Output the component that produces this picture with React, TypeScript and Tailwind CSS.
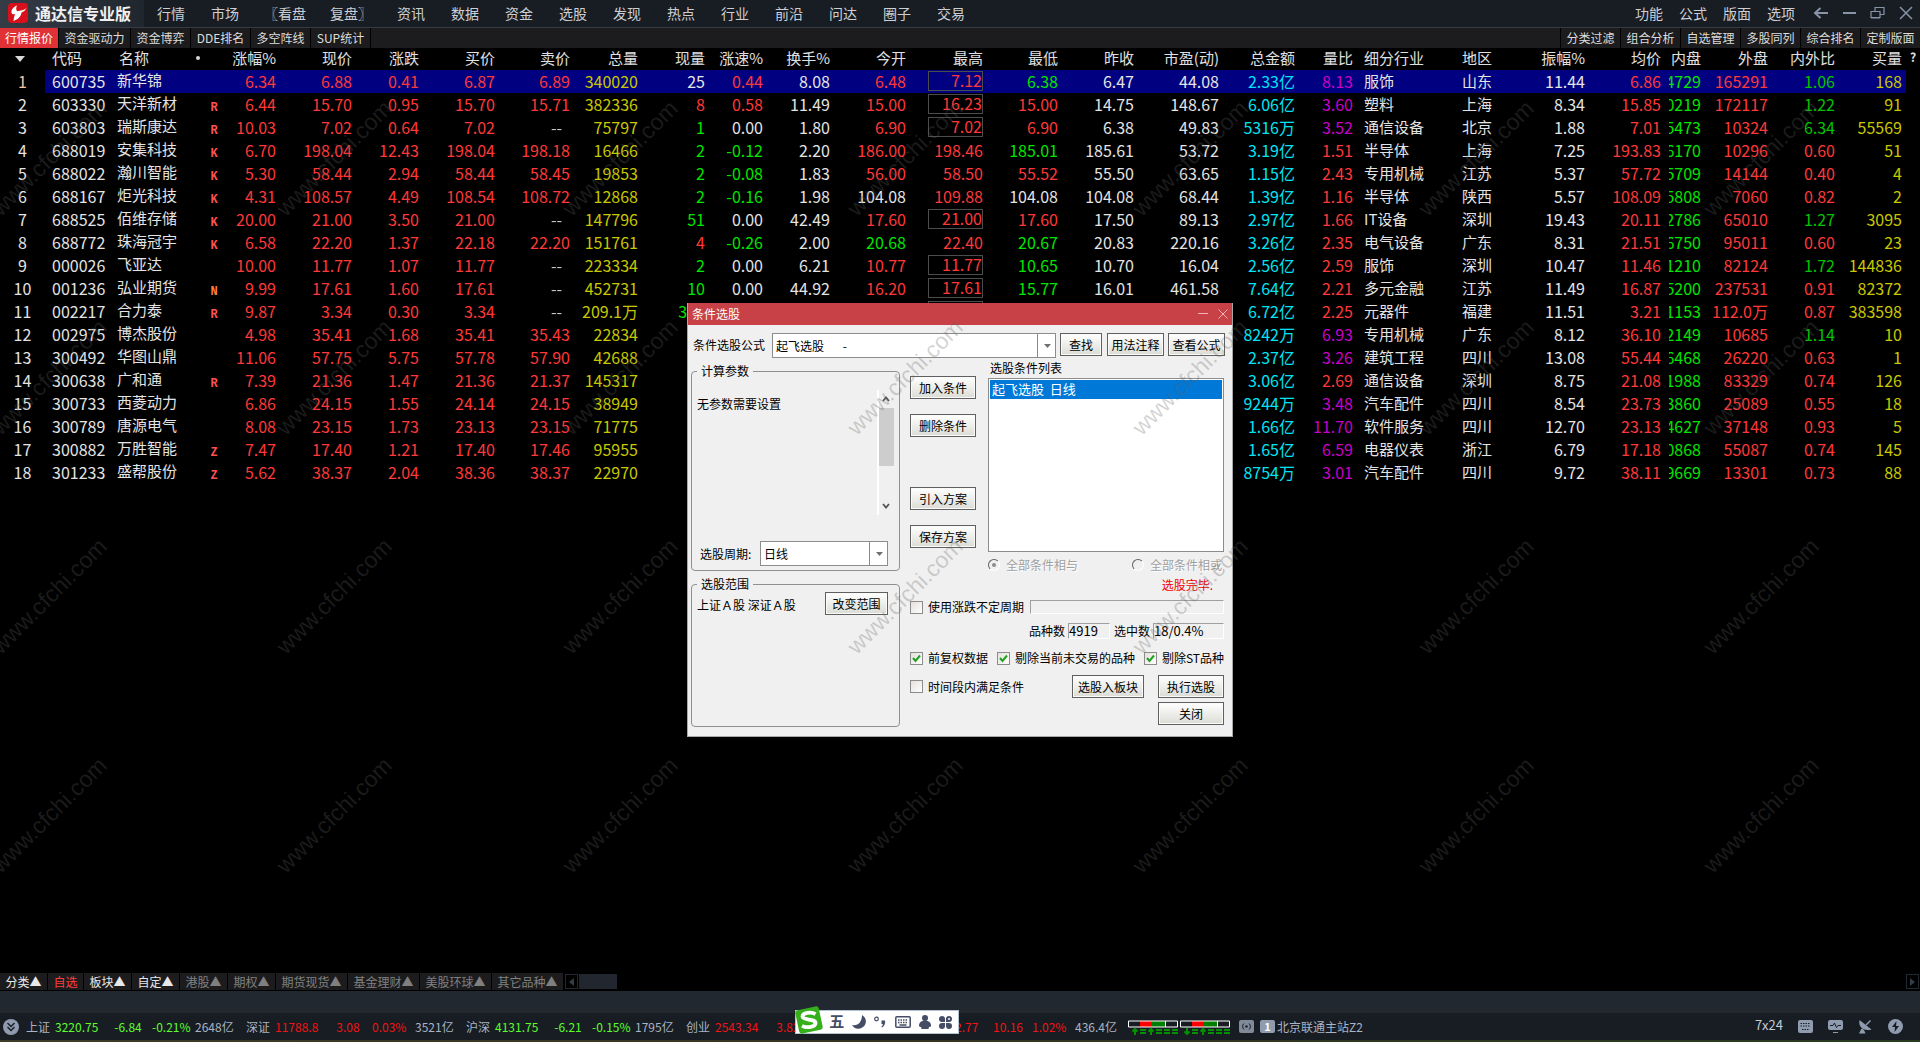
import type { ReactNode } from "react";

type Row = string[];

const HEAD: [string, string][] = [
  ["涨幅%", "w-[50px]"],
  ["现价", "w-[76px]"],
  ["涨跌", "w-[67px]"],
  ["买价", "w-[76px]"],
  ["卖价", "w-[75px]"],
  ["总量", "w-[68px]"],
  ["现量", "w-[67px]"],
  ["涨速%", "w-[58px]"],
  ["换手%", "w-[67px]"],
  ["今开", "w-[76px]"],
  ["最高", "w-[77px]"],
  ["最低", "w-[75px]"],
  ["昨收", "w-[76px]"],
  ["市盈(动)", "w-[85px]"],
  ["总金额", "w-[76px]"],
  ["量比", "w-[58px]"],
  ["细分行业", "w-[109px]"],
  ["地区", "w-[58px]"],
  ["振幅%", "w-[65px]"],
  ["均价", "w-[76px]"],
  ["内盘", "w-[40px]"],
  ["外盘", "w-[67px]"],
  ["内外比", "w-[67px]"],
  ["买量", "w-[71px] pr-1"],
];

const RAW = `600735|新华锦||6.34|6.88|0.41|6.87|6.89|340020|w25|r0.44|8.08|r6.48|*7.12|g6.38|6.47|44.08|2.33亿|m8.13|服饰|山东|11.44|6.86|4729|165291|g1.06|168
603330|天洋新材|R|6.44|15.70|0.95|15.70|15.71|382336|r8|r0.58|11.49|r15.00|*16.23|r15.00|14.75|148.67|6.06亿|m3.60|塑料|上海|8.34|15.85|0219|172117|g1.22|91
603803|瑞斯康达|R|10.03|7.02|0.64|7.02|--|75797|g1|w0.00|1.80|r6.90|*7.02|r6.90|6.38|49.83|5316万|m3.52|通信设备|北京|1.88|7.01|5473|10324|g6.34|55569
688019|安集科技|K|6.70|198.04|12.43|198.04|198.18|16466|g2|g-0.12|2.20|r186.00|198.46|g185.01|185.61|53.72|3.19亿|r1.51|半导体|上海|7.25|193.83|6170|10296|r0.60|51
688022|瀚川智能|K|5.30|58.44|2.94|58.44|58.45|19853|g2|g-0.08|1.83|r56.00|58.50|r55.52|55.50|63.65|1.15亿|r2.43|专用机械|江苏|5.37|57.72|5709|14144|r0.40|4
688167|炬光科技|K|4.31|108.57|4.49|108.54|108.72|12868|g2|g-0.16|1.98|w104.08|109.88|w104.08|104.08|68.44|1.39亿|r1.16|半导体|陕西|5.57|108.09|5808|7060|r0.82|2
688525|佰维存储|K|20.00|21.00|3.50|21.00|--|147796|g51|w0.00|42.49|r17.60|*21.00|r17.60|17.50|89.13|2.97亿|r1.66|IT设备|深圳|19.43|20.11|2786|65010|g1.27|3095
688772|珠海冠宇|K|6.58|22.20|1.37|22.18|22.20|151761|r4|g-0.26|2.00|g20.68|22.40|g20.67|20.83|220.16|3.26亿|r2.35|电气设备|广东|8.31|21.51|6750|95011|r0.60|23
000026|飞亚达||10.00|11.77|1.07|11.77|--|223334|g2|w0.00|6.21|r10.77|*11.77|g10.65|10.70|16.04|2.56亿|r2.59|服饰|深圳|10.47|11.46|1210|82124|g1.72|144836
001236|弘业期货|N|9.99|17.61|1.60|17.61|--|452731|g10|w0.00|44.92|r16.20|*17.61|g15.77|16.01|461.58|7.64亿|r2.21|多元金融|江苏|11.49|16.87|5200|237531|r0.91|82372
002217|合力泰|R|9.87|3.34|0.30|3.34|--|209.1万|g330||||*3.34||||6.72亿|r2.25|元器件|福建|11.51|3.21|1153|112.0万|r0.87|383598
002975|博杰股份||4.98|35.41|1.68|35.41|35.43|22834|||||||||8242万|m6.93|专用机械|广东|8.12|36.10|2149|10685|g1.14|10
300492|华图山鼎||11.06|57.75|5.75|57.78|57.90|42688|||||||||2.37亿|m3.26|建筑工程|四川|13.08|55.44|6468|26220|r0.63|1
300638|广和通|R|7.39|21.36|1.47|21.36|21.37|145317|||||||||3.06亿|r2.69|通信设备|深圳|8.75|21.08|1988|83329|r0.74|126
300733|西菱动力||6.86|24.15|1.55|24.14|24.15|38949|||||||||9244万|m3.48|汽车配件|四川|8.54|23.73|3860|25089|r0.55|18
300789|唐源电气||8.08|23.15|1.73|23.13|23.15|71775|||||||||1.66亿|m11.70|软件服务|四川|12.70|23.13|4627|37148|r0.93|5
300882|万胜智能|Z|7.47|17.40|1.21|17.40|17.46|95955|||||||||1.65亿|m6.59|电器仪表|浙江|6.79|17.18|0868|55087|r0.74|145
301233|盛帮股份|Z|5.62|38.37|2.04|38.36|38.37|22970|||||||||8754万|m3.01|汽车配件|四川|9.72|38.11|9669|13301|r0.73|88`;

const ROWS: Row[] = RAW.split("\n").map((line) => line.split("|"));

const TONE: Record<string, string> = {
  r: "text-[#ff3838]",
  g: "text-[#00e600]",
  w: "text-[#e4e4e4]",
  m: "text-[#c800c8]",
};

const YELLOW = "text-[#c8c800]";
const WHITE = "text-[#e4e4e4]";
const RED = "text-[#ff3838]";

/* Base colour of each column after the marker; "auto" reads the cell's prefix letter. */
const COLUMN_TONE = [
  RED, RED, RED, RED, RED, YELLOW, "auto", "auto", WHITE, "auto", "high", "auto", WHITE, WHITE,
  "text-[#00e4f4]", "auto", "left", "left", WHITE, RED, "clip", RED, "ratio", "last",
];

function QuoteCell({ value, kind }: { value: string; kind: string }) {
  if (kind === "left") return <td className={`pb-0.5 pl-[11px] text-left text-[15px] ${WHITE}`}>{value}</td>;
  if (kind === "last") return <td className={`pr-1 pb-0.5 text-right ${YELLOW}`}>{value}</td>;
  if (kind === "ratio") {
    return <td className={`pb-0.5 text-right ${value[0] === "g" ? "text-[#00c400]" : RED}`}>{value.slice(1)}</td>;
  }
  if (kind === "high") {
    const boxed = value.startsWith("*");
    return (
      <td className={`pb-0.5 text-right ${RED}`}>
        {boxed ? (
          <span className="ml-auto block h-5 w-[55px] border border-[#4c4c4c] leading-4">{value.slice(1)}</span>
        ) : (
          value
        )}
      </td>
    );
  }
  if (kind === "clip") {
    return (
      <td className="pb-0.5">
        <span className="ml-auto flex w-8 justify-end overflow-hidden text-[#00e600]">{value}</span>
      </td>
    );
  }
  if (kind === "auto") return <td className={`pb-0.5 text-right ${TONE[value[0]] ?? ""}`}>{value.slice(1)}</td>;
  const dashes = value === "--";
  return <td className={`pb-0.5 text-right ${dashes ? "pr-2 text-[#c8c8c8]" : kind}`}>{value}</td>;
}

function QuoteTable() {
  return (
    <table className="w-full table-fixed border-collapse whitespace-nowrap text-base leading-5">
      <thead>
        <tr className="h-[22px] text-right text-[15px] leading-5 text-[#e0e0e0]">
          <th className="w-[45px] p-0">
            <svg className="ml-[15px]" width="10" height="6" viewBox="0 0 10 6" aria-label="排序">
              <path d="M0 0h10L5 6z" fill="#d8d8d8" />
            </svg>
          </th>
          <th className="w-[72px] pb-0.5 pl-[7px] text-left font-normal">代码</th>
          <th className="w-[89px] pb-0.5 pl-0.5 text-left font-normal">
            <span className="flex items-center justify-between">
              名称
              <i className="mr-1.5 size-1 rounded-full bg-[#d8d8d8]" />
            </span>
          </th>
          <th className="w-5 p-0" />
          {HEAD.map(([label, width], i) => (
            <th key={label} className={`pb-0.5 font-normal ${width} ${i === 16 ? "pl-[11px] text-left" : i === 17 ? "text-left" : "text-right"}`}>
              {label}
            </th>
          ))}
          <th className="pb-1 text-center text-xs font-bold">?</th>
        </tr>
      </thead>
      <tbody>
        {ROWS.map((row, i) => (
          <tr key={row[0]} className={i === 0 ? "h-[23px] bg-[#000080]" : "h-[23px]"}>
            <td className={`bg-black pb-0.5 text-center ${i === 0 ? "text-[#f0c8a0]" : WHITE}`}>{i + 1}</td>
            <td className={`pb-0.5 pl-[7px] ${WHITE}`}>{row[0]}</td>
            <td className={`pb-[3px] text-[15px] ${WHITE}`}>{row[1]}</td>
            <td className={`pt-[7px] pr-1 text-center font-['Liberation_Mono'] text-xs leading-4 font-bold ${row[2] === "N" ? "text-[#ff8040]" : "text-[#ff5050]"}`}>
              {row[2]}
            </td>
            {COLUMN_TONE.map((kind, c) =>
              c === 17 ? (
                <td key={c} className={`pb-0.5 text-left text-[15px] ${WHITE}`}>{row[c + 3]}</td>
              ) : (
                <QuoteCell key={c} value={row[c + 3]} kind={kind} />
              ),
            )}
            <td className="bg-black" />
          </tr>
        ))}
      </tbody>
    </table>
  );
}

function TitleBar() {
  const menu = ["行情", "市场", "〖看盘", "复盘〗", "资讯", "数据", "资金", "选股", "发现", "热点", "行业", "前沿", "问达", "圈子", "交易"];
  return (
    <header className="flex h-7 items-center border-b border-[#343c46] bg-[#181c23] text-sm text-[#ccd0d6]">
      <h1 className="flex h-full w-36 items-center gap-[7px] bg-linear-to-r from-[#363c45] to-[#20262e] pb-0.5 pl-2 text-base font-bold text-[#f0f0f0]">
        <svg width="20" height="20" viewBox="0 0 20 20" aria-hidden="true">
          <rect width="20" height="20" rx="4" fill="#d8101c" />
          <path d="M9 2.500C5.500 4 3.200 6.500 3.500 9.500c.3 1.800 2 2.200 3.800 1.600-1 2-1.500 4-1.800 6.900 4.500-1.500 7.500-4.500 8-8.500 2.200-.6 3.800-2.200 5-4.500-2.500 2.400-6 2.800-9.200 3.200C8 7.300 7.800 4.800 9 2.500z" fill="#fff" />
        </svg>
        通达信专业版
      </h1>
      <nav className="flex pb-0.5">
        {menu.map((m, i) => (
          <button key={m} className={i === 2 || i === 3 ? "w-[66px]" : "w-[54px]"}>{m}</button>
        ))}
      </nav>
      <div className="ml-auto flex items-center pr-[7px] pb-0.5">
        {["功能", "公式", "版面", "选项"].map((m) => (
          <button key={m} className="w-11">{m}</button>
        ))}
        <div className="flex items-center gap-3.5 pl-2.5 text-[#8793a6]">
          <button aria-label="后退">
            <svg width="16" height="14" viewBox="0 0 16 14" fill="none" stroke="currentColor" strokeWidth="2"><path d="M15 7H2M7.500 2 2 7l5.500 5" /></svg>
          </button>
          <button aria-label="最小化">
            <svg width="13" height="14" viewBox="0 0 13 14" stroke="currentColor" strokeWidth="2"><path d="M0 7h13" /></svg>
          </button>
          <button aria-label="还原">
            <svg width="15" height="14" viewBox="0 0 15 14" fill="none" stroke="currentColor" strokeWidth="1.2"><path d="M1 5.500h9v6H1zM5 5.500v-4h9v7h-4M1 12h9" /></svg>
          </button>
          <button aria-label="关闭窗口">
            <svg width="14" height="14" viewBox="0 0 14 14" fill="none" stroke="currentColor" strokeWidth="1.5"><path d="m1 1 12 12M13 1 1 13" /></svg>
          </button>
        </div>
      </div>
    </header>
  );
}

function ToolTabs() {
  const left: [string, string][] = [
    ["资金驱动力", "w-[72px]"],
    ["资金博弈", "w-[60px]"],
    ["DDE排名", "w-[60px]"],
    ["多空阵线", "w-[60px]"],
    ["SUP统计", "w-[60px]"],
  ];
  return (
    <div className="flex h-5 bg-[#1c1c1e] text-xs text-[#dcdcdc]">
      <button className="w-[59px] border-r border-black bg-[#e03236] text-white">行情报价</button>
      {left.map(([t, w]) => (
        <button key={t} className={`border-r border-black ${w}`}>{t}</button>
      ))}
      <div className="ml-auto flex">
        {["分类过滤", "组合分析", "自选管理", "多股同列", "综合排名", "定制版面"].map((t) => (
          <button key={t} className="w-[60px] border-l border-black">{t}</button>
        ))}
      </div>
    </div>
  );
}

function Btn({ children, className = "w-[66px]" }: { children: ReactNode; className?: string }) {
  return (
    <button className={`h-[23px] shrink-0 border border-[#606060] bg-linear-to-b from-white to-[#dcdcd6] text-center shadow-[inset_0_0_0_1px_#fafafa] ${className}`}>
      {children}
    </button>
  );
}

function Combo({ label, value, className }: { label: string; value: string; className: string }) {
  return (
    <span className={`relative block h-[25px] ${className}`}>
      <select aria-label={label} className="h-full w-full appearance-none border border-[#8c8c8c] bg-white pl-[3px]" defaultValue={value}>
        <option>{value}</option>
      </select>
      <span className="pointer-events-none absolute inset-y-0 right-0 flex w-[19px] items-center justify-center border-l border-[#8c8c8c]">
        <svg width="7" height="4" viewBox="0 0 7 4"><path d="M0 0h7L3.500 4z" fill="#707070" /></svg>
      </span>
    </span>
  );
}

function Check({ label, on = false }: { label: string; on?: boolean }) {
  return (
    <label className="flex items-center gap-[5px]">
      <span className="relative size-[13px]">
        <input type="checkbox" defaultChecked={on} className="block size-[13px] appearance-none border border-[#8c8c8c] bg-linear-to-br from-[#e4e0dc] to-white" />
        {on && (
          <svg className="pointer-events-none absolute inset-0" width="13" height="13" viewBox="0 0 13 13" fill="none" stroke="#21a121" strokeWidth="2"><path d="m3 6 2.500 3L10 3.500" /></svg>
        )}
      </span>
      {label}
    </label>
  );
}

function Radio({ label, on = false }: { label: string; on?: boolean }) {
  return (
    <label className="flex items-center gap-1.5 text-[#a0a0a0] [text-shadow:1px_1px_0_#fff]">
      <span className="relative size-3">
        <input type="radio" name="combine" disabled defaultChecked={on} className="block size-3 appearance-none rounded-full border border-t-[#606060] border-r-white border-b-white border-l-[#606060]" />
        {on && <i className="absolute top-1 left-1 size-1 rounded-full bg-[#8c8c8c]" />}
      </span>
      {label}
    </label>
  );
}

const SUNKEN = "border border-t-[#a0a0a0] border-r-white border-b-white border-l-[#a0a0a0]";

function PickerDialog() {
  return (
    <div className="absolute inset-x-0 top-[303px] z-10 flex justify-center text-xs leading-4 text-black">
      <section role="dialog" aria-label="条件选股" className="h-[434px] w-[546px] border border-t-0 border-[#a8a8a8] bg-[#f0f0f0]">
        <div className="flex h-[22px] items-center bg-[#c84146] px-1 text-white">
          <h2>条件选股</h2>
          <div className="ml-auto flex gap-2.5 text-[#f0b4b6]">
            <button aria-label="最小化对话框"><svg width="10" height="10" viewBox="0 0 10 10" stroke="currentColor"><path d="M0 4.500h10" /></svg></button>
            <button aria-label="关闭对话框"><svg width="10" height="10" viewBox="0 0 10 10" stroke="currentColor"><path d="m.5.5 9 9m0-9-9 9" /></svg></button>
          </div>
        </div>
        <div className="mt-2 flex items-start pl-[5px]">
          <span className="mt-1 w-[79px]">条件选股公式</span>
          <Combo label="条件选股公式" value={"起飞选股\u00a0\u00a0\u00a0\u00a0\u00a0\u00a0\u00a0-"} className="w-[284px]" />
          <Btn className="ml-1 w-[42px]">查找</Btn>
          <Btn className="ml-[5px] w-[57px]">用法注释</Btn>
          <Btn className="ml-1 w-[57px]">查看公式</Btn>
        </div>
        <div className="flex gap-2.5 pr-2 pl-[3px]">
          <div className="mt-1.5 w-[209px] shrink-0">
            <fieldset className="h-[207px] rounded border border-[#909090] pr-1.5 pl-[5px]">
              <legend className="px-1 leading-[14px]">计算参数</legend>
              <div className="flex h-[137px] justify-between pt-3">
                <p className="mt-1.5">无参数需要设置</p>
                <div className="flex w-4 flex-col items-center border-l-2 border-white">
                  <svg className="mt-1.5" width="8" height="6" viewBox="0 0 8 6" fill="none" stroke="#555" strokeWidth="1.8"><path d="m1 5 3-3.500L7 5" /></svg>
                  <i className="mt-1.5 h-[58px] w-[15px] bg-[#cdcdcd]" />
                  <svg className="mt-auto mb-1.5" width="8" height="6" viewBox="0 0 8 6" fill="none" stroke="#555" strokeWidth="1.8"><path d="m1 1 3 3.500L7 1" /></svg>
                </div>
              </div>
              <div className="mt-[26px] flex items-center pl-[3px]">
                <span className="w-[60px]">选股周期:</span>
                <Combo label="选股周期" value="日线" className="w-32" />
              </div>
            </fieldset>
            <fieldset className="mt-1.5 h-[150px] rounded border border-[#909090] pl-[5px]">
              <legend className="px-1 leading-[14px]">选股范围</legend>
              <div className="flex items-start justify-between pr-[11px]">
                <p className="mt-1.5">上证Ａ股 深证Ａ股</p>
                <Btn className="mt-px w-[63px]">改变范围</Btn>
              </div>
            </fieldset>
          </div>
          <div className="flex-1">
            <div className="flex">
              <div className="w-[78px] pt-[18px]">
                <Btn>加入条件</Btn>
                <Btn className="mt-[15px] w-[66px]">删除条件</Btn>
                <Btn className="mt-[50px] w-[66px]">引入方案</Btn>
                <Btn className="mt-[15px] w-[66px]">保存方案</Btn>
              </div>
              <div className="flex-1 pt-0.5">
                <p className="pl-0.5">选股条件列表</p>
                <ul className="mt-0.5 h-[174px] border border-[#8c8c8c] bg-white p-px text-[13px]">
                  <li className="h-[19px] bg-[#0078d7] pl-0.5 leading-[18px] text-white">起飞选股&nbsp;&nbsp;日线</li>
                </ul>
                <div className="mt-[5px] flex justify-between pr-0.5">
                  <Radio label="全部条件相与" on />
                  <Radio label="全部条件相或" />
                </div>
              </div>
            </div>
            <p className="mt-1 pr-[11px] text-right text-[#f00000]">选股完毕.</p>
            <div className="mt-1.5 flex items-center gap-1.5">
              <Check label="使用涨跌不定周期" />
              <output className={`h-[14px] flex-1 ${SUNKEN}`} />
            </div>
            <div className="mt-2 flex items-center justify-end">
              <span>品种数</span>
              <output className={`ml-[3px] h-4 w-[42px] text-[13px] leading-[14px] ${SUNKEN}`}>4919</output>
              <span className="ml-1">选中数</span>
              <output className={`ml-[3px] h-4 w-[71px] text-[13px] leading-[14px] ${SUNKEN}`}>18/0.4%</output>
            </div>
            <div className="mt-[11px] flex justify-between">
              <Check label="前复权数据" on />
              <Check label="剔除当前未交易的品种" on />
              <Check label="剔除ST品种" on />
            </div>
            <div className="mt-[9px] flex items-center">
              <Check label="时间段内满足条件" />
              <Btn className="ml-auto w-[72px]">选股入板块</Btn>
              <Btn className="ml-3.5 w-[66px]">执行选股</Btn>
            </div>
            <div className="mt-1 flex justify-end">
              <Btn>关闭</Btn>
            </div>
          </div>
        </div>
      </section>
    </div>
  );
}

function CategoryTabs() {
  const tabs: [string, string, string][] = [
    ["分类▲", "w-12", "text-[#e8e8e8]"],
    ["自选", "w-9", "text-[#ff3c3c]"],
    ["板块▲", "w-12", "text-[#e8e8e8]"],
    ["自定▲", "w-12", "text-[#e8e8e8]"],
    ["港股▲", "w-12", "text-[#808080]"],
    ["期权▲", "w-12", "text-[#808080]"],
    ["期货现货▲", "w-[72px]", "text-[#808080]"],
    ["基金理财▲", "w-[72px]", "text-[#808080]"],
    ["美股环球▲", "w-[72px]", "text-[#808080]"],
    ["其它品种▲", "w-[72px]", "text-[#808080]"],
  ];
  return (
    <div className="flex h-[18px] items-start text-xs leading-4">
      {tabs.map(([t, w, c]) => (
        <button key={t} className={`h-[17px] border-r border-black bg-[#1c1c1e] ${w} ${c}`}>{t}</button>
      ))}
      <button aria-label="向左滚动" className="mt-px ml-px flex h-[15px] w-[13px] items-center justify-center border border-[#22282f]">
        <svg width="5" height="8" viewBox="0 0 5 8"><path d="M5 0v8L0 4z" fill="#343c46" /></svg>
      </button>
      <i className="mt-px ml-px h-[15px] w-[38px] bg-[#22262f]" />
      <button aria-label="向右滚动" className="mt-px mr-px ml-auto flex h-[15px] w-[13px] items-center justify-center border border-[#22282f]">
        <svg width="5" height="8" viewBox="0 0 5 8"><path d="M0 0v8l5-4z" fill="#343c46" /></svg>
      </button>
    </div>
  );
}

const INDICES: [string, string, string, string, string, string][] = [
  ["上证", "3220.75", "-6.84", "-0.21%", "2648亿", "text-[#5cff2c]"],
  ["深证", "11788.8", "3.08", "0.03%", "3521亿", "text-[#f01414]"],
  ["沪深", "4131.75", "-6.21", "-0.15%", "1795亿", "text-[#5cff2c]"],
  ["创业", "2543.34", "3.82", "", "", "text-[#f01414]"],
  ["", "1002.77", "10.16", "1.02%", "436.4亿", "text-[#f01414]"],
];

function Meter({ down = false }: { down?: boolean }) {
  return (
    <svg width="50" height="15" viewBox="0 0 50 15" fill="none">
      <path d="M12 1h12v6H12z" fill="#ff0000" />
      <path d="M24 1h13v6H24z" fill="#008000" />
      <path d="M.5 1h49v6H.5zM37.500 1v6" stroke="#fff" />
      <path d={down ? "M7 8v6M4.500 11.500 7 14l2.500-2.500M23 15V9M20.500 11.500 23 9l2.500 2.500" : "M7 15V9M4.500 11.500 7 9l2.500 2.500M23 15V9M20.500 11.500 23 9l2.500 2.500"} stroke="#009000" strokeWidth="2" />
      <path d="M12 10h6M12 13h6M28 10h6M28 13h6M36 10h6M36 13h6M44 10h6M44 13h6" stroke="#009000" strokeWidth="2" />
    </svg>
  );
}

function StatusBar() {
  return (
    <footer className="flex h-[27px] items-center whitespace-nowrap bg-[#181c23] text-xs text-[#a8b4c4]">
      <button aria-label="展开" className="ml-[3px] w-[23px]">
        <svg width="16" height="16" viewBox="0 0 16 16" fill="none"><circle cx="8" cy="8" r="8" fill="#8f9bae" /><path d="m4.500 4 3.500 3.500L11.500 4m-7 4L8 11.500 11.500 8" stroke="#181c23" strokeWidth="1.400" /></svg>
      </button>
      {INDICES.map(([name, price, change, pct, amount, tone]) => (
        <div key={price} className="flex w-[220px] shrink-0">
          <span className="w-[29px]">{name}</span>
          <span className={`w-[49px] ${tone}`}>{price}</span>
          <span className={`w-12 text-center ${tone}`}>{change}</span>
          <span className={`w-[43px] ${tone}`}>{pct}</span>
          <span>{amount}</span>
        </div>
      ))}
      <div className="ml-0.5 flex items-center gap-0.5 pt-0.5">
        <Meter />
        <Meter down />
      </div>
      <svg className="ml-[9px]" width="15" height="13" viewBox="0 0 15 13" fill="none"><rect width="15" height="13" rx="2" fill="#808a98" /><circle cx="7.500" cy="6.500" r="1.200" fill="#181c23" /><path d="M5 3.500a4 4 0 0 0 0 6m5-6a4 4 0 0 1 0 6" stroke="#181c23" /></svg>
      <b className="ml-1.5 flex h-[13px] w-[15px] items-center justify-center rounded-xs bg-[#8f9bae] text-[11px] text-white">1</b>
      <span className="ml-0.5">北京联通主站Z2</span>
      <div className="mr-[17px] ml-auto flex items-center gap-[15px] text-[#8f9bae]">
        <span className="pb-1 text-[13px] text-[#c4ccd6]">7x24</span>
        <svg width="15" height="13" viewBox="0 0 15 13"><rect width="15" height="13" rx="2" fill="currentColor" /><path d="M2.500 3.500h10M2.500 6h10M4 9.500h7" stroke="#181c23" strokeDasharray="1.500 1" /></svg>
        <svg width="15" height="13" viewBox="0 0 15 13" fill="none"><rect width="15" height="10" rx="2" fill="currentColor" /><path d="M5 12.500h5" stroke="currentColor" /><path d="M2 5.500h3L6.500 3l2 4.500L10 5.500h3" stroke="#181c23" /></svg>
        <svg width="15" height="15" viewBox="0 0 15 15" fill="none"><path d="M1.500 1C0 7 5 13 13.500 10.500z" fill="currentColor" /><path d="m8 6 4.500-4.500" stroke="currentColor" strokeWidth="1.500" /><path d="M3.500 9.500 1 14.500h6.500L6 11z" fill="currentColor" /></svg>
        <svg width="15" height="15" viewBox="0 0 15 15"><circle cx="7.500" cy="7.500" r="7.500" fill="currentColor" /><path d="M8.500 2 4 8h3l-.5 5L11 7H8z" fill="#181c23" /></svg>
      </div>
    </footer>
  );
}

function InputMethodBar() {
  return (
    <div className="absolute bottom-2 left-[795px] z-20 flex h-[24px] w-[164px] items-center justify-between border border-[#b4c4d4] bg-white pr-[6px] text-[#454d66]">
      <svg className="-mt-1 -mr-0.5 -ml-px" width="28" height="32" viewBox="0 0 28 32" fill="none">
        <rect x="2" y="4" width="24" height="24" rx="3" fill="#35b01c" transform="rotate(-12 14 16)" />
        <path d="M20.500 10C16 7.500 7.500 8.500 7.500 12.500c0 4 13 2 13 6.500 0 4-8.500 5.500-13.500 2.800" stroke="#fff" strokeWidth="3.800" />
      </svg>
      <span className="pb-0.5 text-[15px] leading-5 font-bold">五</span>
      <svg width="14" height="14" viewBox="0 0 14 14"><path d="M10 0c5 3 5 9 1 12-4 3-9 2-11-2 6 1.500 10-3 10-10z" fill="currentColor" /></svg>
      <svg width="12" height="12" viewBox="0 0 12 12" fill="none"><circle cx="2.500" cy="3" r="1.800" stroke="currentColor" strokeWidth="1.200" /><path d="M7.500 4.500h3.500c.6 3-.5 5.500-3 7l-.6-.8c1-.7 1.500-1.700 1.400-2.700H7.500z" fill="currentColor" /></svg>
      <svg width="16" height="12" viewBox="0 0 16 12" fill="none" stroke="currentColor" strokeWidth="1.500"><rect x=".8" y=".8" width="14.400" height="10.400" rx="1" /><path d="M3 4h10M3 6.500h10" strokeDasharray="1.500 1" /><path d="M4.500 9h7" /></svg>
      <svg width="12" height="14" viewBox="0 0 12 14" fill="currentColor"><circle cx="6" cy="3" r="3" /><path d="M6 5.500c4 0 6 2.500 6 5 0 1.300-1 1.700-2 1.200L9.500 14h-7L2 11.700c-1 .5-2 .1-2-1.200 0-2.500 2-5 6-5z" /></svg>
      <svg width="13" height="13" viewBox="0 0 13 13" fill="currentColor"><path d="M3 0a3 3 0 0 1 3 3v3H3a3 3 0 0 1 0-6zM3 7h3v3a3 3 0 1 1-3-3zM7 7h3a3 3 0 1 1-3 3zM7 6V3a3 3 0 1 1 3 3z" /><circle cx="10" cy="3" r="1" fill="#fff" /></svg>
    </div>
  );
}

function Watermarks() {
  return (
    <div aria-hidden="true" className="pointer-events-none absolute inset-0 z-30 overflow-hidden">
      <div className="mt-[49px] -ml-[94px] grid w-[1998px] grid-cols-7 font-['Liberation_Sans'] text-[23px] text-[#606060]/28">
        {Array.from({ length: 28 }, (_, i) => (
          <span key={i} className="flex h-[219px] items-center justify-center">
            <span className="-rotate-45">www.cfchi.com</span>
          </span>
        ))}
      </div>
    </div>
  );
}

export default function App() {
  return (
    <div className="relative flex min-h-screen flex-col overflow-hidden bg-black font-['Noto_Sans_CJK_SC',sans-serif]">
      <TitleBar />
      <ToolTabs />
      <main className="flex-1">
        <QuoteTable />
      </main>
      <CategoryTabs />
      <div className="h-[22px] bg-[#22282f]" />
      <StatusBar />
      <div className="h-0.5 bg-linear-to-r from-[#3c3c28] via-[#343420] to-[#283c20]" />
      <PickerDialog />
      <InputMethodBar />
      <Watermarks />
    </div>
  );
}
